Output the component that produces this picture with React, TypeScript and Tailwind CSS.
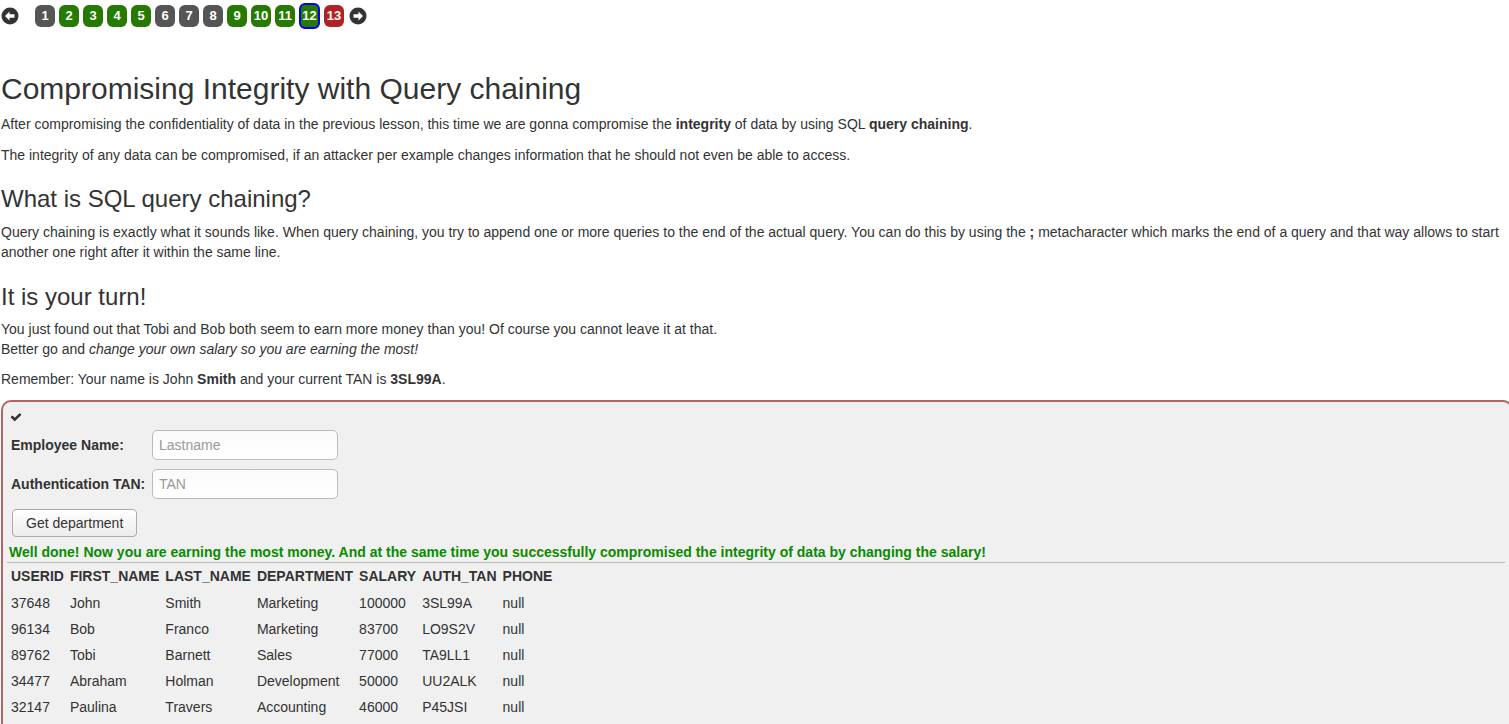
import type { ReactNode } from 'react';

type PageState = 'gray' | 'green' | 'red';

const pages: { n: number; state: PageState; current?: boolean }[] = [
  { n: 1, state: 'gray' },
  { n: 2, state: 'green' },
  { n: 3, state: 'green' },
  { n: 4, state: 'green' },
  { n: 5, state: 'green' },
  { n: 6, state: 'gray' },
  { n: 7, state: 'gray' },
  { n: 8, state: 'gray' },
  { n: 9, state: 'green' },
  { n: 10, state: 'green' },
  { n: 11, state: 'green' },
  { n: 12, state: 'green', current: true },
  { n: 13, state: 'red' }
];

const employees = [
  ['37648', 'John', 'Smith', 'Marketing', '100000', '3SL99A', 'null'],
  ['96134', 'Bob', 'Franco', 'Marketing', '83700', 'LO9S2V', 'null'],
  ['89762', 'Tobi', 'Barnett', 'Sales', '77000', 'TA9LL1', 'null'],
  ['34477', 'Abraham', 'Holman', 'Development', '50000', 'UU2ALK', 'null'],
  ['32147', 'Paulina', 'Travers', 'Accounting', '46000', 'P45JSI', 'null']
];

const columns = ['USERID', 'FIRST_NAME', 'LAST_NAME', 'DEPARTMENT', 'SALARY', 'AUTH_TAN', 'PHONE'];

function ArrowCircle({ dir }: { dir: 'left' | 'right' }) {
  return (
    <svg width="18" height="18" viewBox="0 0 18 18">
      <circle cx="9" cy="9" r="8.5" fill="#333" />
      <g transform={dir === 'left' ? '' : 'translate(18,0) scale(-1,1)'}>
        <path d="M4 9 L8.5 4.6 L8.5 7.3 L13.5 7.3 L13.5 10.7 L8.5 10.7 L8.5 13.4 Z" fill="#fff" />
      </g>
    </svg>
  );
}

function PageBadge({ n, state, current }: { n: number; state: PageState; current?: boolean }) {
  const bg =
    state === 'green' ? 'bg-[#267a00]' : state === 'red' ? 'bg-[#b32222]' : 'bg-[#555555]';
  return (
    <div
      className={`flex items-center justify-center rounded-[6px] text-white font-bold text-[13px] leading-none ${bg} ${
        current ? 'w-[21px] h-[26px] border-2 border-[#0000ff] rounded-[5px]' : 'w-[20px] h-[22px]'
      }`}
    >
      {n}
    </div>
  );
}

function Para({ children, className = 'mb-[10px]' }: { children: ReactNode; className?: string }) {
  return <p className={`text-[14px] leading-[20px] ${className}`}>{children}</p>;
}

function CheckIcon() {
  return (
    <svg width="12" height="12" viewBox="0 0 1792 1792">
      <path
        fill="#333"
        d="M1671 566q0 40-28 68l-724 724-136 136q-28 28-68 28t-68-28l-136-136-362-362q-28-28-28-68t28-68l136-136q28-28 68-28t68 28l294 295 656-657q28-28 68-28t68 28l136 136q28 28 28 68z"
      />
    </svg>
  );
}

const inputClass =
  'h-[30px] w-[186px] rounded-[5px] border border-[#bbb] bg-gradient-to-b from-[#fafafa] to-white px-[6px] text-[14px] placeholder:text-[#999] outline-none';

export default function App() {
  return (
    <div
      className="min-h-screen bg-white text-[#333] overflow-hidden"
      style={{ fontFamily: '"Liberation Sans", Arial, sans-serif' }}
    >
      <div className="flex items-center h-[31px] pl-[1px]">
        <ArrowCircle dir="left" />
        <div className="flex items-center gap-[4px] ml-[16px]">
          {pages.map(p => (
            <PageBadge key={p.n} {...p} />
          ))}
        </div>
        <div className="ml-[5px]">
          <ArrowCircle dir="right" />
        </div>
      </div>

      <div className="pl-[1px]">
        <h1 className="text-[30px] leading-[33px] mt-[41px] mb-[9px] font-normal">
          Compromising Integrity with Query chaining
        </h1>
        <Para className="mb-[11px]">
          After compromising the confidentiality of data in the previous lesson, this time we are gonna compromise the{' '}
          <b>integrity</b> of data by using SQL <b>query chaining</b>.
        </Para>
        <Para>
          The integrity of any data can be compromised, if an attacker per example changes information that he should not
          even be able to access.
        </Para>
        <h3 className="text-[24px] leading-[26px] mt-[21px] mb-[10px] font-normal">What is SQL query chaining?</h3>
        <Para className="mb-[22px]">
          Query chaining is exactly what it sounds like. When query chaining, you try to append one or more queries to the end
          of the actual query. You can do this by using the <b>;</b> metacharacter which marks the end of a query and that way
          allows to start another one right after it within the same line.
        </Para>
        <h3 className="text-[24px] leading-[26px] mb-[9px] font-normal">It is your turn!</h3>
        <Para>
          You just found out that Tobi and Bob both seem to earn more money than you! Of course you cannot leave it at that.
          <br />
          Better go and <i>change your own salary so you are earning the most!</i>
        </Para>
        <Para className="mb-[11px]">
          Remember: Your name is John <b>Smith</b> and your current TAN is <b>3SL99A</b>.
        </Para>
      </div>

      <div className="w-[1512px] border-2 border-[#b06666] rounded-[10px] bg-[#f0f0f0] pt-[9px] pl-[6px] pb-[12px] ml-[1px]">
        <div className="pl-[1px] h-[14px]">
          <CheckIcon />
        </div>
        <div className="grid grid-cols-[141px_186px] gap-y-[9px] items-center mt-[5px] pl-[2px]">
          <label className="font-bold text-[14px] leading-[20px]">Employee Name:</label>
          <input placeholder="Lastname" className={inputClass} />
          <label className="font-bold text-[14px] leading-[20px]">Authentication TAN:</label>
          <input placeholder="TAN" className={inputClass} />
        </div>
        <button className="mt-[10px] ml-[3px] h-[28px] px-[13px] rounded-[4px] border border-[#aaa] bg-gradient-to-b from-white to-[#ececec] text-[14px] text-[#333]">
          Get department
        </button>
        <div className="mt-[5px] text-[14px] leading-[20px] font-bold text-[#0b8a00]">
          Well done! Now you are earning the most money. And at the same time you successfully compromised the integrity of
          data by changing the salary!
        </div>
        <div className="h-[1px] bg-[#bbbbbb] mr-[6px] -ml-[2px]" />
        <table className="border-collapse -ml-[1px] text-[14px] leading-[20px]">
          <thead>
            <tr>
              {columns.map(c => (
                <th key={c} className="px-[3px] pt-[3px] pb-[4px] text-left font-bold">
                  {c}
                </th>
              ))}
            </tr>
          </thead>
          <tbody>
            {employees.map(row => (
              <tr key={row[0]}>
                {row.map((cell, i) => (
                  <td key={i} className="px-[3px] py-[3px]">
                    {cell}
                  </td>
                ))}
              </tr>
            ))}
          </tbody>
        </table>
      </div>
    </div>
  );
}
